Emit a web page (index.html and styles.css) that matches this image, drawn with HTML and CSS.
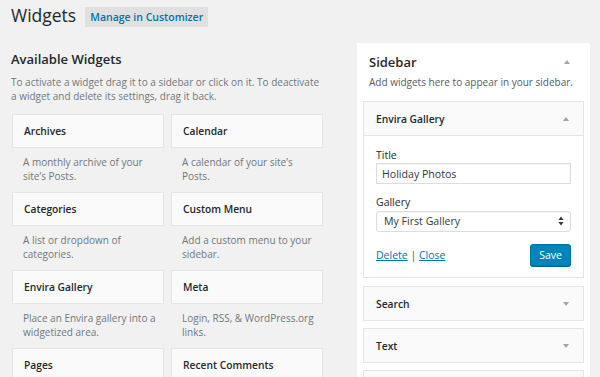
FILE: index.html
```html
<!DOCTYPE html>
<html lang="en">
<head>
  <meta charset="UTF-8" />
  <title>Widgets</title>
  <link rel="stylesheet" href="styles.css">
</head>
<body>
  <div class="wrap">
    <div class="page-head">
      <h1>Widgets</h1>
      <a class="head-btn" href="#">Manage in Customizer</a>
    </div>

    <div class="columns">
      <!-- Available widgets -->
      <div class="available">
        <h2>Available Widgets</h2>
        <p class="intro">To activate a widget drag it to a sidebar or click on it. To deactivate a widget and delete its settings, drag it back.</p>

        <div class="widget-grid">
          <div class="widget-item">
            <div class="widget-card">Archives</div>
            <p class="widget-desc">A monthly archive of your site’s Posts.</p>
          </div>
          <div class="widget-item">
            <div class="widget-card">Calendar</div>
            <p class="widget-desc">A calendar of your site’s Posts.</p>
          </div>
          <div class="widget-item">
            <div class="widget-card">Categories</div>
            <p class="widget-desc">A list or dropdown of categories.</p>
          </div>
          <div class="widget-item">
            <div class="widget-card">Custom Menu</div>
            <p class="widget-desc">Add a custom menu to your sidebar.</p>
          </div>
          <div class="widget-item">
            <div class="widget-card">Envira Gallery</div>
            <p class="widget-desc">Place an Envira gallery into a widgetized area.</p>
          </div>
          <div class="widget-item">
            <div class="widget-card">Meta</div>
            <p class="widget-desc">Login, RSS, &amp; WordPress.org links.</p>
          </div>
          <div class="widget-item">
            <div class="widget-card">Pages</div>
          </div>
          <div class="widget-item">
            <div class="widget-card">Recent Comments</div>
          </div>
        </div>
      </div>

      <!-- Sidebar area -->
      <div class="sidebar-panel">
        <div class="sidebar-head">
          <h3>Sidebar</h3>
          <span class="arrow up"></span>
        </div>
        <p class="sidebar-desc">Add widgets here to appear in your sidebar.</p>

        <div class="sb-widget open">
          <div class="sb-widget-top">
            <span>Envira Gallery</span>
            <span class="arrow up"></span>
          </div>
          <div class="sb-widget-body">
            <label>Title</label>
            <input class="field" value="Holiday Photos">
            <label>Gallery</label>
            <div class="field select">
              <span>My First Gallery</span>
              <svg width="6" height="10" viewBox="0 0 6 10"><path d="M3 0.5 L5.6 4 H0.4 Z M3 9.5 L5.6 6 H0.4 Z" fill="#32373c"/></svg>
            </div>
            <div class="actions">
              <div class="links"><a href="#">Delete</a> | <a href="#">Close</a></div>
              <button>Save</button>
            </div>
          </div>
        </div>

        <div class="sb-widget">
          <div class="sb-widget-top">
            <span>Search</span>
            <span class="arrow down"></span>
          </div>
        </div>
        <div class="sb-widget">
          <div class="sb-widget-top">
            <span>Text</span>
            <span class="arrow down"></span>
          </div>
        </div>
        <div class="sb-widget">
          <div class="sb-widget-top"></div>
        </div>
      </div>
    </div>
  </div>
</body>
</html>
```

FILE: styles.css
```css
body {
  margin: 0;
  font-family: "Open Sans", Arial, sans-serif;
  background-color: #f1f1f1;
  color: #444;
  overflow: hidden;
}

.wrap {
  padding: 0 10px 0 11px;
}

.page-head {
  display: flex;
  align-items: center;
  gap: 9px;
  height: 34px;
}

h1 {
  margin: 0;
  font-size: 17.5px;
  font-weight: 400;
  color: #23282d;
  line-height: 1;
  padding-bottom: 2px;
}

.head-btn {
  background: #e0e0e0;
  color: #0073aa;
  font-size: 10.5px;
  font-weight: 600;
  text-decoration: none;
  padding: 3px 5px;
  line-height: 14px;
}

.columns {
  display: flex;
  gap: 34px;
  margin-top: 15px;
}

.available {
  width: 312px;
}

h2 {
  margin: 0;
  font-size: 13px;
  font-weight: 600;
  color: #23282d;
  line-height: 20px;
}

.intro {
  margin: 6px 0 0;
  font-size: 10px;
  line-height: 14.3px;
  color: #72777c;
}

.widget-grid {
  display: grid;
  grid-template-columns: 152px 152px;
  column-gap: 7px;
  margin-top: 10px;
  padding-left: 1px;
}

.widget-card {
  background: #fafafa;
  border: 1px solid #e5e5e5;
  height: 32px;
  display: flex;
  align-items: center;
  padding-left: 11px;
  font-size: 10.25px;
  font-weight: 600;
  color: #23282d;
}

.widget-desc {
  margin: 0;
  padding: 7px 4px 8.7px 11px;
  font-size: 10px;
  line-height: 14.3px;
  color: #72777c;
}

.sidebar-panel {
  width: 233px;
  background: #fff;
  margin-top: -6px;
  padding: 0 6px;
  box-sizing: border-box;
  height: 400px;
}

.sidebar-head {
  display: flex;
  justify-content: space-between;
  align-items: center;
  padding: 10px 14px 0 6px;
}

h3 {
  margin: 0;
  font-size: 13px;
  font-weight: 600;
  color: #23282d;
  line-height: 18px;
}

.sidebar-desc {
  margin: 4px 0 0 6px;
  font-size: 10px;
  line-height: 15px;
  color: #555d66;
}

.arrow {
  width: 0;
  height: 0;
  border-left: 3px solid transparent;
  border-right: 3px solid transparent;
}

.arrow.up {
  border-bottom: 4px solid #a0a5aa;
}

.arrow.down {
  border-top: 4px solid #a0a5aa;
}

.sb-widget {
  background: #fafafa;
  border: 1px solid #e5e5e5;
  margin-top: 7px;
}

.sb-widget.open {
  margin-top: 11px;
  margin-bottom: 8px;
}

.sb-widget-top {
  height: 33px;
  display: flex;
  justify-content: space-between;
  align-items: center;
  padding: 0 14px 0 12px;
  font-size: 10.25px;
  font-weight: 600;
  color: #23282d;
}

.open .sb-widget-top {
  border-bottom: 1px solid #e5e5e5;
}

.sb-widget-body {
  background: #fff;
  padding: 12px 12px 11px 12px;
}

.sb-widget-body label {
  display: block;
  font-size: 10.5px;
  color: #23282d;
  line-height: 15px;
}

.field {
  display: flex;
  align-items: center;
  box-sizing: border-box;
  width: 100%;
  height: 21px;
  margin: 0 0 10.5px;
  padding: 0 5px;
  border: 1px solid #ddd;
  background: #fff;
  font-family: "Open Sans", Arial, sans-serif;
  font-size: 10.6px;
  color: #32373c;
  box-shadow: inset 0 1px 2px rgba(0,0,0,0.05);
}

.select {
  justify-content: space-between;
  padding: 0 6px 0 7px;
  border-radius: 3px;
  margin-top: 1px;
  margin-bottom: 12.5px;
}

.actions {
  display: flex;
  justify-content: space-between;
  align-items: center;
}

.links {
  font-size: 10.5px;
  color: #555;
}

.links a {
  color: #0073aa;
}

button {
  font-family: "Open Sans", Arial, sans-serif;
  font-size: 10.5px;
  background-color: #0085ba;
  color: #fff;
  border: 1px solid #0073aa;
  border-radius: 3px;
  height: 22px;
  padding: 0 8px;
  box-shadow: 0 1px 0 #006799;
}
```
